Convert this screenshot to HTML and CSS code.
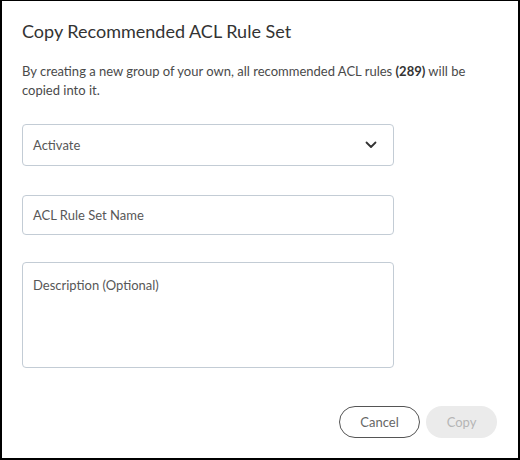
FILE: index.html
```html
<!DOCTYPE html>
<html>
<head>
<meta charset="utf-8">
<link rel="stylesheet" href="styles.css">
</head>
<body>
<div class="dialog">
  <h1 class="title">Copy Recommended ACL Rule Set</h1>
  <p class="intro">By creating a new group of your own, all recommended ACL rules <b>(289)</b> will be copied into it.</p>
  <div class="fields">
    <div class="field select">
      <span class="value">Activate</span>
      <svg class="chev" width="12" height="8" viewBox="0 0 12 8"><path d="M1.5 1.5 L6 6 L10.5 1.5" fill="none" stroke="#333" stroke-width="1.8" stroke-linecap="round" stroke-linejoin="round"/></svg>
    </div>
    <div class="field input"><span class="placeholder">ACL Rule Set Name</span></div>
    <div class="field textarea"><span class="placeholder">Description (Optional)</span></div>
  </div>
  <div class="actions">
    <button class="btn cancel">Cancel</button>
    <button class="btn copy">Copy</button>
  </div>
</div>
</body>
</html>
```
FILE: styles.css
```css
html, body { margin: 0; padding: 0; background: #fff; }
.dialog {
  width: 520px; height: 460px; box-sizing: border-box;
  border-style: solid; border-color: #000;
  border-width: 1px 2px 2px 2px;
  padding: 18px 20px 0 20px;
  font-family: Lato, "Open Sans", sans-serif;
  color: #333;
  display: flex; flex-direction: column;
}
.title { margin: 0; font-size: 18px; font-weight: 400; line-height: 24px; color: #333; }
.intro { margin: 19px 0 0 0; font-size: 13px; line-height: 19px; color: #4a4a4a; }
.intro b { font-weight: 700; color: #333; }
.fields { display: flex; flex-direction: column; gap: 29px; width: 372px; margin-top: 24px; }
.field {
  box-sizing: border-box; border: 1px solid #c3ccd5; border-radius: 4px;
  font-size: 13px; padding: 0 10px;
}
.select { height: 42px; display: flex; align-items: center; justify-content: space-between; padding-right: 16px; }
.input { height: 40px; display: flex; align-items: center; }
.textarea { height: 106px; padding-top: 14px; margin-top: -2px; }
.placeholder, .value { color: #575757; }
.actions { display: flex; justify-content: flex-end; gap: 6px; margin-top: 38px; padding-right: 1px; }
.btn {
  height: 32px; border-radius: 16px; font-family: Lato, "Open Sans", sans-serif;
  font-size: 13px; box-sizing: border-box;
}
.cancel { width: 81px; background: #fff; border: 1px solid #555; color: #666; }
.copy { width: 71px; background: #ebebeb; border: none; color: #b5b5b5; }
```
